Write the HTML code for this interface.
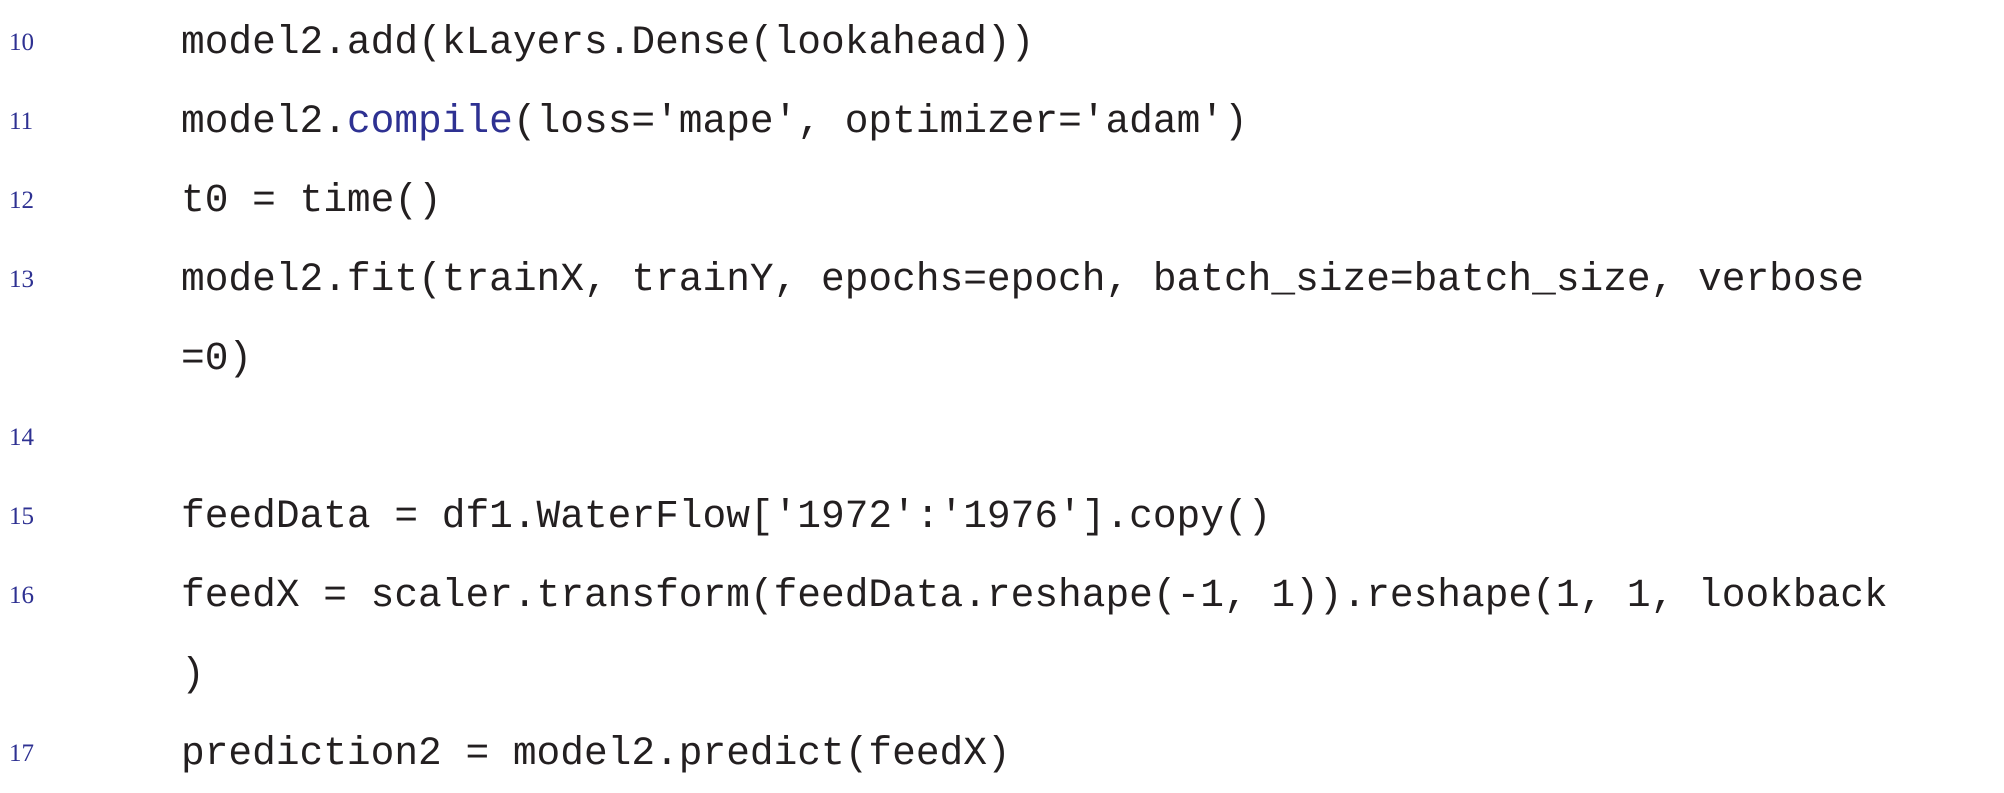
<!DOCTYPE html>
<html><head><meta charset="utf-8"><style>
html,body{margin:0;padding:0;background:#fff;width:2004px;height:791px;overflow:hidden}
.wrap{position:absolute;top:3px;left:0}
.l{height:79px;line-height:79px;white-space:pre;position:relative}
.n{position:absolute;left:9px;font-family:"Liberation Serif",serif;font-size:25px;color:#2e3192}
.c{position:absolute;left:181px;font-family:"Liberation Mono",monospace;font-size:39.5px;color:#231f20}
.b{color:#2e3192}
</style></head><body><div class="wrap">
<div class="l"><span class="n">10</span><span class="c">model2.add(kLayers.Dense(lookahead))</span></div>
<div class="l"><span class="n">11</span><span class="c">model2.<span class="b">compile</span>(loss='mape', optimizer='adam')</span></div>
<div class="l"><span class="n">12</span><span class="c">t0 = time()</span></div>
<div class="l"><span class="n">13</span><span class="c">model2.fit(trainX, trainY, epochs=epoch, batch_size=batch_size, verbose</span></div>
<div class="l"><span class="c">=0)</span></div>
<div class="l"><span class="n">14</span></div>
<div class="l"><span class="n">15</span><span class="c">feedData = df1.WaterFlow['1972':'1976'].copy()</span></div>
<div class="l"><span class="n">16</span><span class="c">feedX = scaler.transform(feedData.reshape(-1, 1)).reshape(1, 1, lookback</span></div>
<div class="l"><span class="c">)</span></div>
<div class="l"><span class="n">17</span><span class="c">prediction2 = model2.predict(feedX)</span></div>
</div></body></html>
